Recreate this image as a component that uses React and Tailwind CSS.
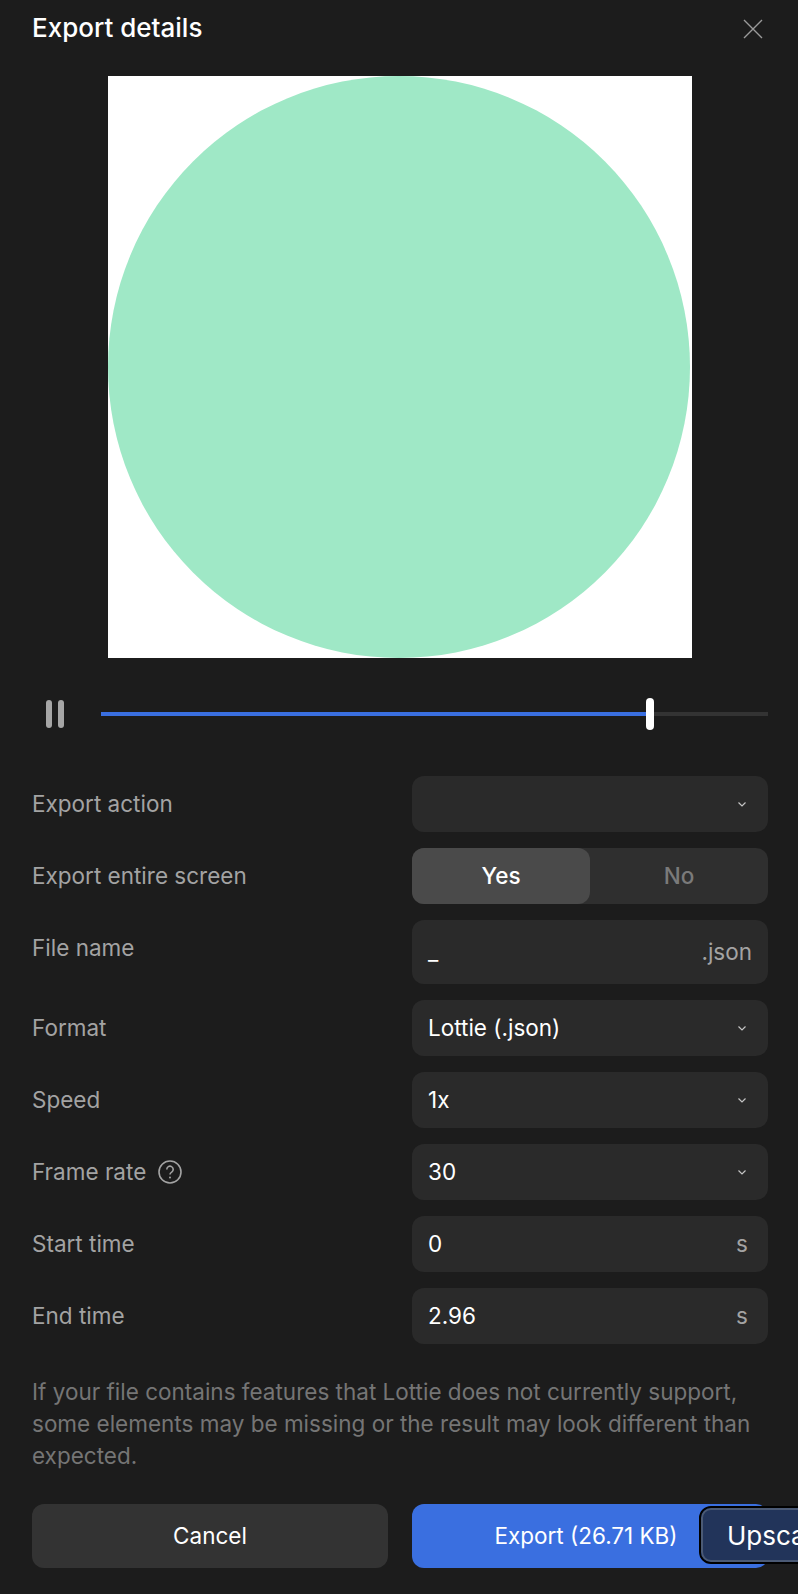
import React from "react";

const font = { fontFamily: "Inter, sans-serif" };

function Chevron() {
  return (
    <svg width="12" height="12" viewBox="0 0 12 12" fill="none" stroke="#c4c4c4" strokeWidth="1.2" className="shrink-0">
      <path d="M2.5 4.5 L6 8 L9.5 4.5" />
    </svg>
  );
}

function Row({ label, children, tall }) {
  return (
    <div className={`flex justify-between ${tall ? "h-16" : "h-14 items-center"}`}>
      <div className={`flex items-center gap-3 text-[22.5px] text-[#a3a3a3] ${tall ? "h-14" : ""}`}>{label}</div>
      {children}
    </div>
  );
}

function Select({ value }) {
  return (
    <div className="flex h-14 w-[356px] items-center justify-between rounded-xl bg-[#2a2a2a] pl-4 pr-5 text-[22.5px] text-white">
      <span>{value}</span>
      <Chevron />
    </div>
  );
}

function TimeInput({ value }) {
  return (
    <div className="flex h-14 w-[356px] items-center justify-between rounded-xl bg-[#2a2a2a] pl-4 pr-5 text-[22.5px] text-white">
      <span>{value}</span>
      <span className="text-[#a3a3a3]">s</span>
    </div>
  );
}

export default function App() {
  return (
    <div className="relative h-[1594px] w-[798px] overflow-hidden bg-[#1c1c1c]" style={font}>
      <div className="flex h-[76px] items-start justify-between pl-8 pr-[34px] pt-3">
        <h1 className="text-[26px] font-medium leading-8 text-white">Export details</h1>
        <svg width="22" height="22" viewBox="0 0 22 22" fill="none" stroke="#9a9a9a" strokeWidth="1.4" className="mt-[6px]">
          <path d="M2 2 L20 20 M20 2 L2 20" />
        </svg>
      </div>

      <div className="ml-[108px] h-[582px] w-[584px] bg-white">
        <div className="h-[582px] w-[582px] rounded-full bg-[#9fe8c6]" />
      </div>

      <div className="mt-[32px] flex h-12 items-center pl-[46px] pr-[30px]">
        <div className="flex gap-[6px]">
          <div className="h-7 w-[6px] rounded-full bg-[#a6a6a6]" />
          <div className="h-7 w-[6px] rounded-full bg-[#a6a6a6]" />
        </div>
        <div className="relative ml-[37px] flex h-1 flex-1">
          <div className="w-[546px] bg-[#3a6fe0]" />
          <div className="flex-1 bg-[#333333]" />
          <div className="absolute left-[545px] top-[-14px] h-8 w-2 rounded-full bg-white" />
        </div>
      </div>

      <div className="mt-[38px] flex flex-col gap-4 pl-8 pr-[30px]">
        <Row label="Export action">
          <Select value="" />
        </Row>
        <Row label="Export entire screen">
          <div className="flex h-14 w-[356px] rounded-xl bg-[#2f2f2f] text-[22.5px]">
            <div className="flex w-[178px] items-center justify-center rounded-xl bg-[#4a4a4a] font-medium text-white">Yes</div>
            <div className="flex flex-1 items-center justify-center font-medium text-[#7a7a7a]">No</div>
          </div>
        </Row>
        <Row label="File name" tall>
          <div className="flex h-16 w-[356px] items-center justify-between rounded-xl bg-[#2a2a2a] pl-4 pr-4 text-[22.5px] text-white">
            <span>_</span>
            <span className="text-[#a3a3a3]">.json</span>
          </div>
        </Row>
        <Row label="Format">
          <Select value="Lottie (.json)" />
        </Row>
        <Row label="Speed">
          <Select value="1x" />
        </Row>
        <Row
          label={
            <>
              <span>Frame rate</span>
              <svg width="24" height="24" viewBox="0 0 24 24" fill="none" stroke="#a3a3a3" strokeWidth="1.6">
                <circle cx="12" cy="12" r="11" />
                <path d="M8.8 9.4 a3.2 3.2 0 1 1 4.9 2.7 c-1.1 .7 -1.7 1.2 -1.7 2.4" />
                <circle cx="12" cy="17.6" r="1" fill="#a3a3a3" stroke="none" />
              </svg>
            </>
          }
        >
          <Select value="30" />
        </Row>
        <Row label="Start time">
          <TimeInput value="0" />
        </Row>
        <Row label="End time">
          <TimeInput value="2.96" />
        </Row>
      </div>

      <p className="mt-8 pl-8 pr-[30px] text-[22.5px] leading-8 text-[#757575]">
        If your file contains features that Lottie does not currently support, some elements may be missing or the result may look different than expected.
      </p>

      <div className="mt-8 flex justify-between pl-8 pr-[30px]">
        <button className="h-16 w-[356px] rounded-xl bg-[#333333] text-[22.5px] text-white">Cancel</button>
        <button className="h-16 w-[356px] rounded-xl bg-[#3a6fe0] pr-[8px] text-[22.5px] text-white">Export (26.71 KB)</button>
      </div>

      <div className="absolute left-[701px] top-[1508px] flex h-[54px] w-[120px] items-center rounded-[10px] border-2 border-[#4b5a75] bg-[#22345a] pl-6 text-[26px] text-white outline-2 outline-black">
        Upscale
      </div>
    </div>
  );
}
